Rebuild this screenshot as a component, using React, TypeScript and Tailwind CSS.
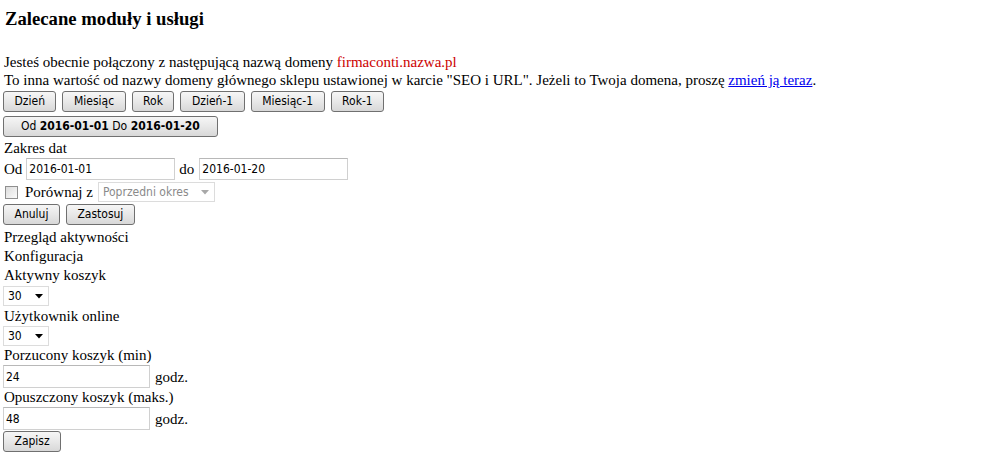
import React from 'react';

const ui = '[font-family:"DejaVu_Sans_Condensed","DejaVu_Sans",Tahoma,sans-serif] font-stretch-condensed';

const btn = `h-[21px] px-[10.5px] border border-[#707070] rounded-[3px] bg-gradient-to-b from-[#f6f6f6] via-[#e8e8e8] to-[#d8d8d8] text-[12px] leading-[19px] text-black whitespace-nowrap ${ui}`;

const field = `h-[22px] border border-[#d0d0d0] border-t-[#b8b8b8] bg-white px-[2px] text-[12px] text-black outline-none ${ui}`;

function Arrow({ color = '#000' }: { color?: string }) {
  return (
    <svg width="8" height="5" viewBox="0 0 8 5" className="shrink-0">
      <path d="M0 0 L8 0 L4 4.5 Z" fill={color} />
    </svg>
  );
}

function FakeSelect({ value, width, disabled }: { value: string; width: string; disabled?: boolean }) {
  return (
    <div
      className={`${width} shrink-0 h-[20px] flex items-center justify-between border border-[#dcdcdc] bg-white pl-[4px] pr-[5px] text-[12px] whitespace-nowrap ${ui} ${
        disabled ? 'text-[#8a8a8a]' : 'text-black'
      }`}
    >
      <span>{value}</span>
      <Arrow color={disabled ? '#a8a8a8' : '#000'} />
    </div>
  );
}

const presets = ['Dzień', 'Miesiąc', 'Rok', 'Dzień-1', 'Miesiąc-1', 'Rok-1'];

export default function App() {
  return (
    <div className="min-h-screen bg-white text-black text-[15px] leading-[18px] [font-family:'Liberation_Serif','Times_New_Roman',serif] pl-[3px]">
      <h3 className="pl-[2px] pt-[8px] h-[53px] text-[18.7px] leading-[21px] font-bold">Zalecane moduły i usługi</h3>

      <div className="pl-[1px]">
        <div>
          Jesteś obecnie połączony z następującą nazwą domeny{' '}
          <span className="text-[#cc0000]">firmaconti.nazwa.pl</span>
        </div>
        <div>
          To inna wartość od nazwy domeny głównego sklepu ustawionej w karcie "SEO i URL". Jeżeli to Twoja domena,
          proszę{' '}
          <a href="#" className="text-[#0000ee] underline">
            zmień ją teraz
          </a>
          .
        </div>
      </div>

      <div className="flex gap-[6px] mt-[2px]">
        {presets.map((p) => (
          <button key={p} className={btn}>
            {p}
          </button>
        ))}
      </div>

      <div className="mt-[4px]">
        <button className={`${btn} px-[17px]`}>
          Od <b>2016-01-01</b> Do <b>2016-01-20</b>
        </button>
      </div>

      <div className="mt-[2px] pl-[1px]">Zakres dat</div>
      <div className="flex items-center h-[22px] mt-[1px] pl-[1px]">
        <span className="mr-[4px]">Od</span>
        <input readOnly defaultValue="2016-01-01" className={`${field} w-[149px]`} />
        <span className="ml-[4px] mr-[5px]">do</span>
        <input readOnly defaultValue="2016-01-20" className={`${field} w-[149px]`} />
      </div>

      <div className="flex items-center h-[22px] mt-[1px]">
        <span className="ml-[2px] w-[13px] h-[13px] border border-[#8f8f8f] bg-gradient-to-br from-[#dcdcdc] to-[#fbfbfb]" />
        <span className="ml-[7px] mr-[5px]">Porównaj z</span>
        <FakeSelect value="Poprzedni okres" width="w-[117px]" disabled />
      </div>

      <div className="flex gap-[6px] mt-[1px]">
        <button className={btn}>Anuluj</button>
        <button className={btn}>Zastosuj</button>
      </div>

      <div className="mt-[3px] leading-[19px] pl-[1px]">Przegląd aktywności</div>
      <div className="leading-[19px] pl-[1px]">Konfiguracja</div>
      <div className="leading-[19px] pl-[1px]">Aktywny koszyk</div>
      <div className="mt-[1px]">
        <FakeSelect value="30" width="w-[46px]" />
      </div>
      <div className="mt-[1px] leading-[19px] pl-[1px]">Użytkownik online</div>
      <FakeSelect value="30" width="w-[46px]" />
      <div className="leading-[19px] pl-[1px]">Porzucony koszyk (min)</div>
      <div className="flex items-center">
        <input readOnly defaultValue="24" className={`${field} w-[147px] h-[23px]`} />
        <span className="ml-[5px]">godz.</span>
      </div>
      <div className="leading-[19px] pl-[1px]">Opuszczony koszyk (maks.)</div>
      <div className="flex items-center">
        <input readOnly defaultValue="48" className={`${field} w-[147px] h-[23px]`} />
        <span className="ml-[5px]">godz.</span>
      </div>
      <div className="mt-[1px]">
        <button className={`${btn} px-[9px]`}>Zapisz</button>
      </div>
    </div>
  );
}
